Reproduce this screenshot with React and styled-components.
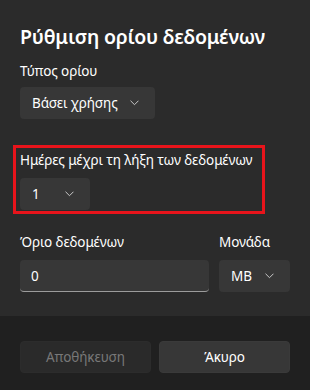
import React from "react";
import styled, { createGlobalStyle } from "styled-components";

const GlobalStyle = createGlobalStyle`
  html, body {
    margin: 0;
    padding: 0;
    background: #202020;
  }
  body {
    font-family: "Noto Sans", "Open Sans", sans-serif;
    color: #ffffff;
    -webkit-font-smoothing: antialiased;
  }
`;

const Dialog = styled.div`
  width: 310px;
  height: 390px;
  display: flex;
  flex-direction: column;
  background: #202020;
`;

const Content = styled.div`
  background: #2b2b2b;
  padding: 23px 20px 24px 20px;
  display: flex;
  flex-direction: column;
`;

const Title = styled.h1`
  margin: 0 0 10px;
  font-size: 19.5px;
  line-height: 28px;
  font-weight: 600;
  letter-spacing: -0.2px;
`;

const Field = styled.div`
  display: flex;
  flex-direction: column;
  gap: ${(p) => p.gap || 8}px;
`;

const Label = styled.div`
  font-size: 13.5px;
  line-height: 20px;
  letter-spacing: -0.1px;
  color: #ffffff;
`;

const Highlight = styled.div`
  width: 242px;
  margin: 26px 0 18px -7px;
  padding: 2px 0 1px 4px;
  border: 3px solid #e8141b;
`;

const Row = styled.div`
  display: flex;
  gap: 10px;
`;

const Dropdown = styled.div`
  box-sizing: border-box;
  width: ${(p) => p.width}px;
  height: 32px;
  padding: 0 16px 0 12px;
  display: flex;
  align-items: center;
  justify-content: space-between;
  background: #373737;
  border-radius: 4px;
  font-size: 13.5px;
  letter-spacing: -0.1px;
  color: #ffffff;
`;

const Input = styled.div`
  box-sizing: border-box;
  flex: 1;
  height: 32px;
  padding: 0 11px;
  display: flex;
  align-items: center;
  background: #373737;
  border-radius: 4px;
  border-bottom: 1px solid #9c9c9c;
  font-size: 13.5px;
`;

const Footer = styled.div`
  flex: 1;
  padding: 25px 20px 0;
  display: flex;
  gap: 8px;
  align-items: flex-start;
`;

const Button = styled.button`
  box-sizing: border-box;
  flex: 1;
  height: 32px;
  border-radius: 4px;
  border: 1px solid ${(p) => (p.disabled ? "#2c2c2c" : "#3a3a3a")};
  background: ${(p) => (p.disabled ? "#2a2a2a" : "#373737")};
  color: ${(p) => (p.disabled ? "#787878" : "#ffffff")};
  font-family: inherit;
  font-size: 13.5px;
  letter-spacing: -0.1px;
  padding: 0;
`;

const Chevron = () => (
  <svg width="9" height="6" viewBox="0 0 9 6" fill="none">
    <path d="M0.8 1 L4.5 4.7 L8.2 1" stroke="#c8c8c8" strokeWidth="1" strokeLinecap="round" strokeLinejoin="round" />
  </svg>
);

export default function App() {
  return (
    <>
      <GlobalStyle />
      <Dialog>
        <Content>
          <Title>Ρύθμιση ορίου δεδομένων</Title>
          <Field gap={6}>
            <Label>Τύπος ορίου</Label>
            <Dropdown width={135}>
              <span>Βάσει χρήσης</span>
              <Chevron />
            </Dropdown>
          </Field>
          <Highlight>
            <Field>
              <Label>Ημέρες μέχρι τη λήξη των δεδομένων</Label>
              <Dropdown width={70}>
                <span>1</span>
                <Chevron />
              </Dropdown>
            </Field>
          </Highlight>
          <Row>
            <Field style={{ flex: 1 }}>
              <Label>Όριο δεδομένων</Label>
              <Input>0</Input>
            </Field>
            <Field>
              <Label>Μονάδα</Label>
              <Dropdown width={71}>
                <span>MB</span>
                <Chevron />
              </Dropdown>
            </Field>
          </Row>
        </Content>
        <Footer>
          <Button disabled>Αποθήκευση</Button>
          <Button>Άκυρο</Button>
        </Footer>
      </Dialog>
    </>
  );
}
